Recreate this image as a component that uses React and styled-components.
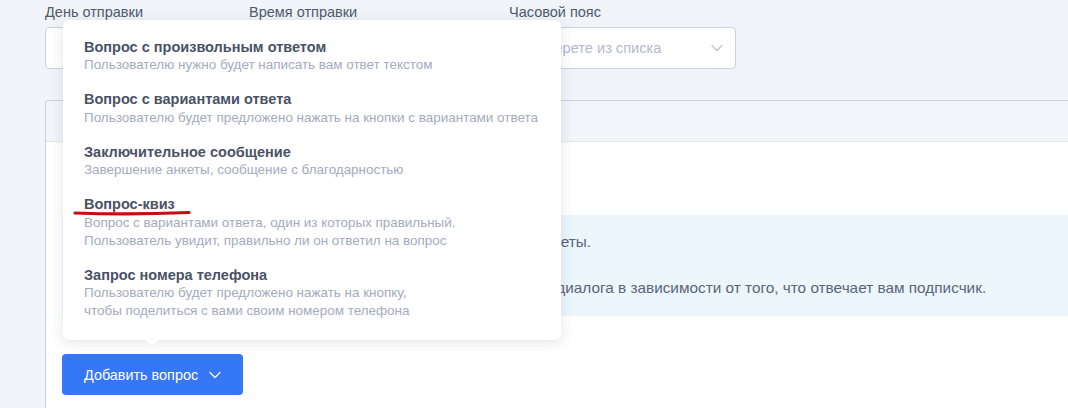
import React from "react";
import styled, { createGlobalStyle } from "styled-components";

const Global = createGlobalStyle`
  html, body { margin: 0; padding: 0; background: #f1f5fa; overflow: hidden; }
  body { font-family: "Liberation Sans", Arial, sans-serif; }
  * { box-sizing: border-box; }
`;

const Page = styled.div`
  width: 1240px;
  padding: 3px 0 0 45px;
`;

const FieldsRow = styled.div`
  display: flex;
  gap: 20px;
`;

const Field = styled.div`
  display: flex;
  flex-direction: column;
  gap: 6px;
  width: ${(p) => p.$w}px;
`;

const Label = styled.div`
  font-size: 14.5px;
  line-height: 18px;
  color: #4f5a6e;
`;

const Select = styled.div`
  height: 42px;
  border: 1px solid #c9d1e3;
  border-radius: 4px;
  background: #fff;
  display: flex;
  align-items: center;
  justify-content: space-between;
  padding: 0 12px 0 16px;
  font-size: 14.6px;
  color: #b3bacb;
`;

const Card = styled.div`
  margin-top: 31px;
  border-top: 1px solid #c8d1e4;
  border-left: 1px solid #c8d1e4;
  border-top-left-radius: 4px;
  background: #fff;
  min-height: 320px;
`;

const CardHeader = styled.div`
  height: 41px;
  background: #f2f5fa;
  border-bottom: 1px solid #e3e5ef;
  border-top-left-radius: 4px;
`;

const CardBody = styled.div`
  padding: 73px 0 0 16px;
`;

const InfoBox = styled.div`
  background: #ecf6fd;
  padding: 17px 0 18px 22px;
  display: flex;
  flex-direction: column;
  gap: 26px;
`;

const InfoText = styled.p`
  margin: 0;
  font-size: 15.35px;
  line-height: 20px;
  color: #5b6579;
  white-space: nowrap;
`;

const ButtonWrap = styled.div`
  position: relative;
  margin-top: 38px;
  display: inline-block;
`;

const AddButton = styled.button`
  height: 41px;
  padding: 0 22px;
  border: none;
  border-radius: 4px;
  background: #3677f8;
  color: #fff;
  font-family: inherit;
  font-size: 14.4px;
  display: flex;
  align-items: center;
  gap: 11px;
`;

const Menu = styled.div`
  position: absolute;
  left: 1px;
  bottom: 55px;
  width: 498px;
  background: #fff;
  border-radius: 6px;
  box-shadow: 0 2px 14px rgba(40, 50, 80, 0.13);
  padding: 9.5px 0 12px;
  &::after {
    content: "";
    position: absolute;
    left: 83px;
    bottom: -6px;
    border-left: 6px solid transparent;
    border-right: 6px solid transparent;
    border-top: 6px solid #fff;
  }
`;

const Item = styled.div`
  position: relative;
  padding: 8px 21px;
`;

const ItemTitle = styled.div`
  font-size: 14.5px;
  font-weight: 700;
  line-height: 18.5px;
  color: #4a5266;
`;

const ItemDesc = styled.div`
  font-size: 13.45px;
  line-height: 18px;
  color: #a3abbc;
`;

const Underline = styled.svg`
  position: absolute;
  left: 10px;
  top: 22px;
  width: 118px;
  height: 8px;
  overflow: visible;
`;

const Chevron = ({ color }) => (
  <svg width="12" height="8" viewBox="0 0 12 8" fill="none">
    <polyline points="1,1.5 6,6.5 11,1.5" stroke={color} strokeWidth="1.2" strokeLinecap="round" strokeLinejoin="round" />
  </svg>
);

const items = [
  { t: "Вопрос с произвольным ответом", d: ["Пользователю нужно будет написать вам ответ текстом"] },
  { t: "Вопрос с вариантами ответа", d: ["Пользователю будет предложено нажать на кнопки с вариантами ответа"] },
  { t: "Заключительное сообщение", d: ["Завершение анкеты, сообщение с благодарностью"] },
  {
    t: "Вопрос-квиз",
    d: ["Вопрос с вариантами ответа, один из которых правильный.", "Пользователь увидит, правильно ли он ответил на вопрос"],
    mark: true,
  },
  {
    t: "Запрос номера телефона",
    d: ["Пользователю будет предложено нажать на кнопку,", "чтобы поделиться с вами своим номером телефона"],
  },
];

export default function App() {
  return (
    <>
      <Global />
      <Page>
        <FieldsRow>
          <Field $w={184}>
            <Label>День отправки</Label>
            <Select>Выберите<Chevron color="#b9c0cf" /></Select>
          </Field>
          <Field $w={240}>
            <Label>Время отправки</Label>
            <Select>Выберите<Chevron color="#b9c0cf" /></Select>
          </Field>
          <Field $w={227}>
            <Label>Часовой пояс</Label>
            <Select>Выберете из списка<Chevron color="#b9c0cf" /></Select>
          </Field>
        </FieldsRow>
        <Card>
          <CardHeader />
          <CardBody>
            <InfoBox>
              <InfoText>Вы можете написать вопросы, которые будут заданы во время анкеты.</InfoText>
              <InfoText>С помощью вопросов с вариантами ответа Вы меняете структуру диалога в зависимости от того, что отвечает вам подписчик.</InfoText>
            </InfoBox>
            <ButtonWrap>
              <Menu>
                {items.map((it) => (
                  <Item key={it.t}>
                    <ItemTitle>{it.t}</ItemTitle>
                    {it.d.map((line) => (
                      <ItemDesc key={line}>{line}</ItemDesc>
                    ))}
                    {it.mark && (
                      <Underline viewBox="0 0 118 8">
                        <path d="M2 4 C 30 5, 80 5, 116 3.5" stroke="#c80c12" strokeWidth="3.2" fill="none" strokeLinecap="round" />
                      </Underline>
                    )}
                  </Item>
                ))}
              </Menu>
              <AddButton>
                Добавить вопрос
                <Chevron color="#ffffff" />
              </AddButton>
            </ButtonWrap>
          </CardBody>
        </Card>
      </Page>
    </>
  );
}
